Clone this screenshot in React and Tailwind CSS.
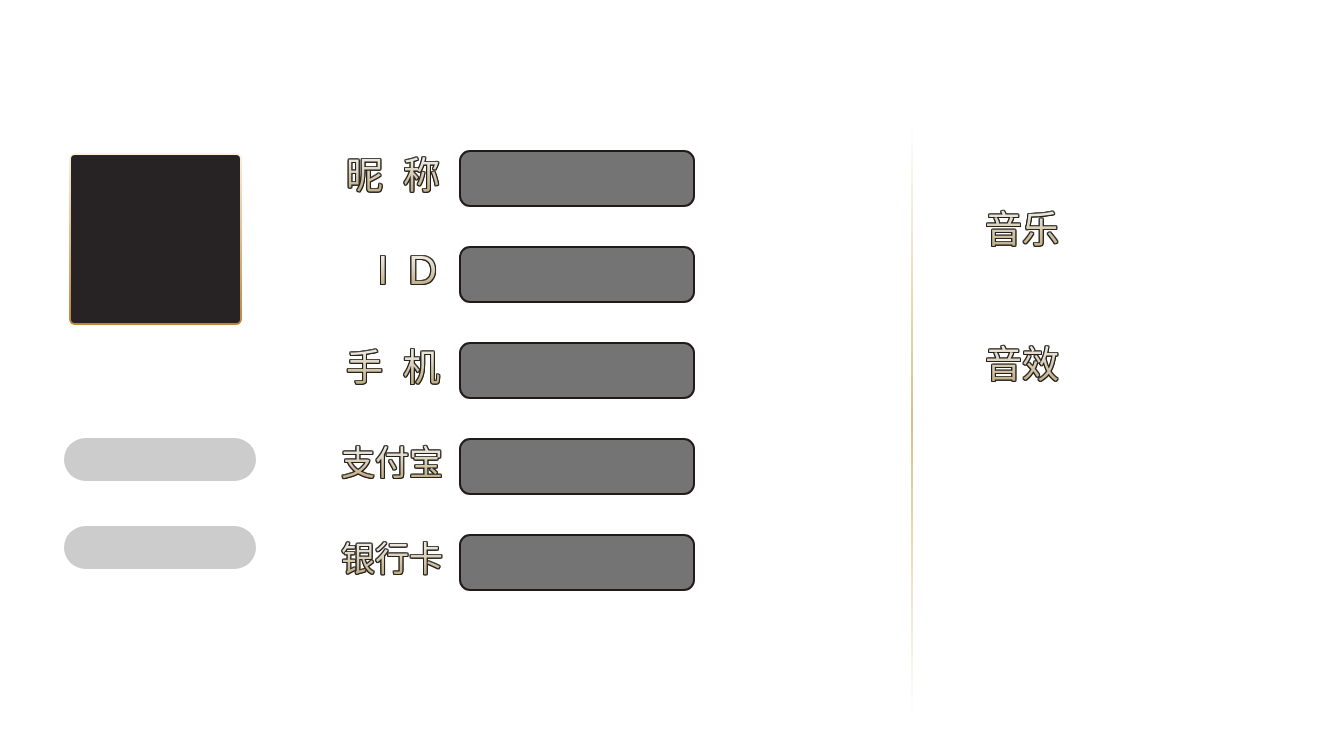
const engraved =
  "bg-linear-to-b from-[#ebe6dc] from-25% to-[#c2b089] to-85% bg-clip-text text-transparent [filter:drop-shadow(1px_0_0_#24211c)_drop-shadow(-1px_0_0_#24211c)_drop-shadow(0_1px_0_#24211c)_drop-shadow(0_-1px_0_#4a4640)] font-['Noto_Sans_CJK_SC',sans-serif]";

const engravedLatin =
  "bg-linear-to-b from-[#ebe6dc] from-25% to-[#c2b089] to-85% bg-clip-text text-transparent [filter:drop-shadow(1px_0_0_#24211c)_drop-shadow(-1px_0_0_#24211c)_drop-shadow(0_1px_0_#24211c)_drop-shadow(0_-1px_0_#4a4640)] font-['Lato',sans-serif]";

const fields = [
  { id: "nickname", parts: ["昵", "称"], size: "text-[37px] gap-5 pr-[3px]", face: engraved },
  { id: "user-id", parts: ["I", "D"], size: "text-[38px] gap-5 pr-[6px]", face: engravedLatin },
  { id: "phone", parts: ["手", "机"], size: "text-[37px] gap-5 pr-[3px]", face: engraved },
  { id: "alipay", parts: ["支付宝"], size: "text-[34px]", face: engraved },
  { id: "bank-card", parts: ["银行卡"], size: "text-[34px]", face: engraved },
];

function Field({ id, parts, size, face }) {
  return (
    <div className="flex items-center gap-4">
      <label htmlFor={id} className={`flex w-28 justify-end pb-3 leading-[44px] ${size}`}>
        {parts.map((part) => (
          <span key={part} className={face}>
            {part}
          </span>
        ))}
      </label>
      <input
        id={id}
        type="text"
        className="h-[57px] w-[236px] rounded-[11px] border-2 border-[#231b1a] bg-[#747474] px-4 text-xl text-white"
      />
    </div>
  );
}

function Profile() {
  return (
    <section className="flex flex-col pt-[153px] pl-16">
      <div className="ml-[5px] h-[172px] w-[173px] rounded-md bg-linear-to-b from-[#fff1dd] to-[#bd8535] p-0.5">
        <div className="h-full rounded bg-[#272223]" />
      </div>
      <div className="flex flex-col gap-[45px] pt-[113px]">
        <button type="button" aria-label="切换账号" className="h-[43px] w-48 rounded-full bg-[#cccccc]" />
        <button type="button" aria-label="退出登录" className="h-[43px] w-48 rounded-full bg-[#cccccc]" />
      </div>
    </section>
  );
}

export default function App() {
  return (
    <main className="grid min-h-screen grid-cols-[256fr_655fr_423fr] bg-white">
      <Profile />
      <form className="flex flex-col gap-[39px] pt-[150px] pl-[75px]">
        {fields.map((field) => (
          <Field key={field.id} {...field} />
        ))}
      </form>
      <section className="flex gap-[72px]">
        <div className="mt-[120px] mb-8 w-0.5 bg-linear-to-b from-transparent via-[#d9c184] to-transparent" />
        <div className="flex flex-col gap-[83px] pt-[201px] text-[37px] leading-[52px]">
          <h2 className={engraved}>音乐</h2>
          <h2 className={engraved}>音效</h2>
        </div>
      </section>
    </main>
  );
}
